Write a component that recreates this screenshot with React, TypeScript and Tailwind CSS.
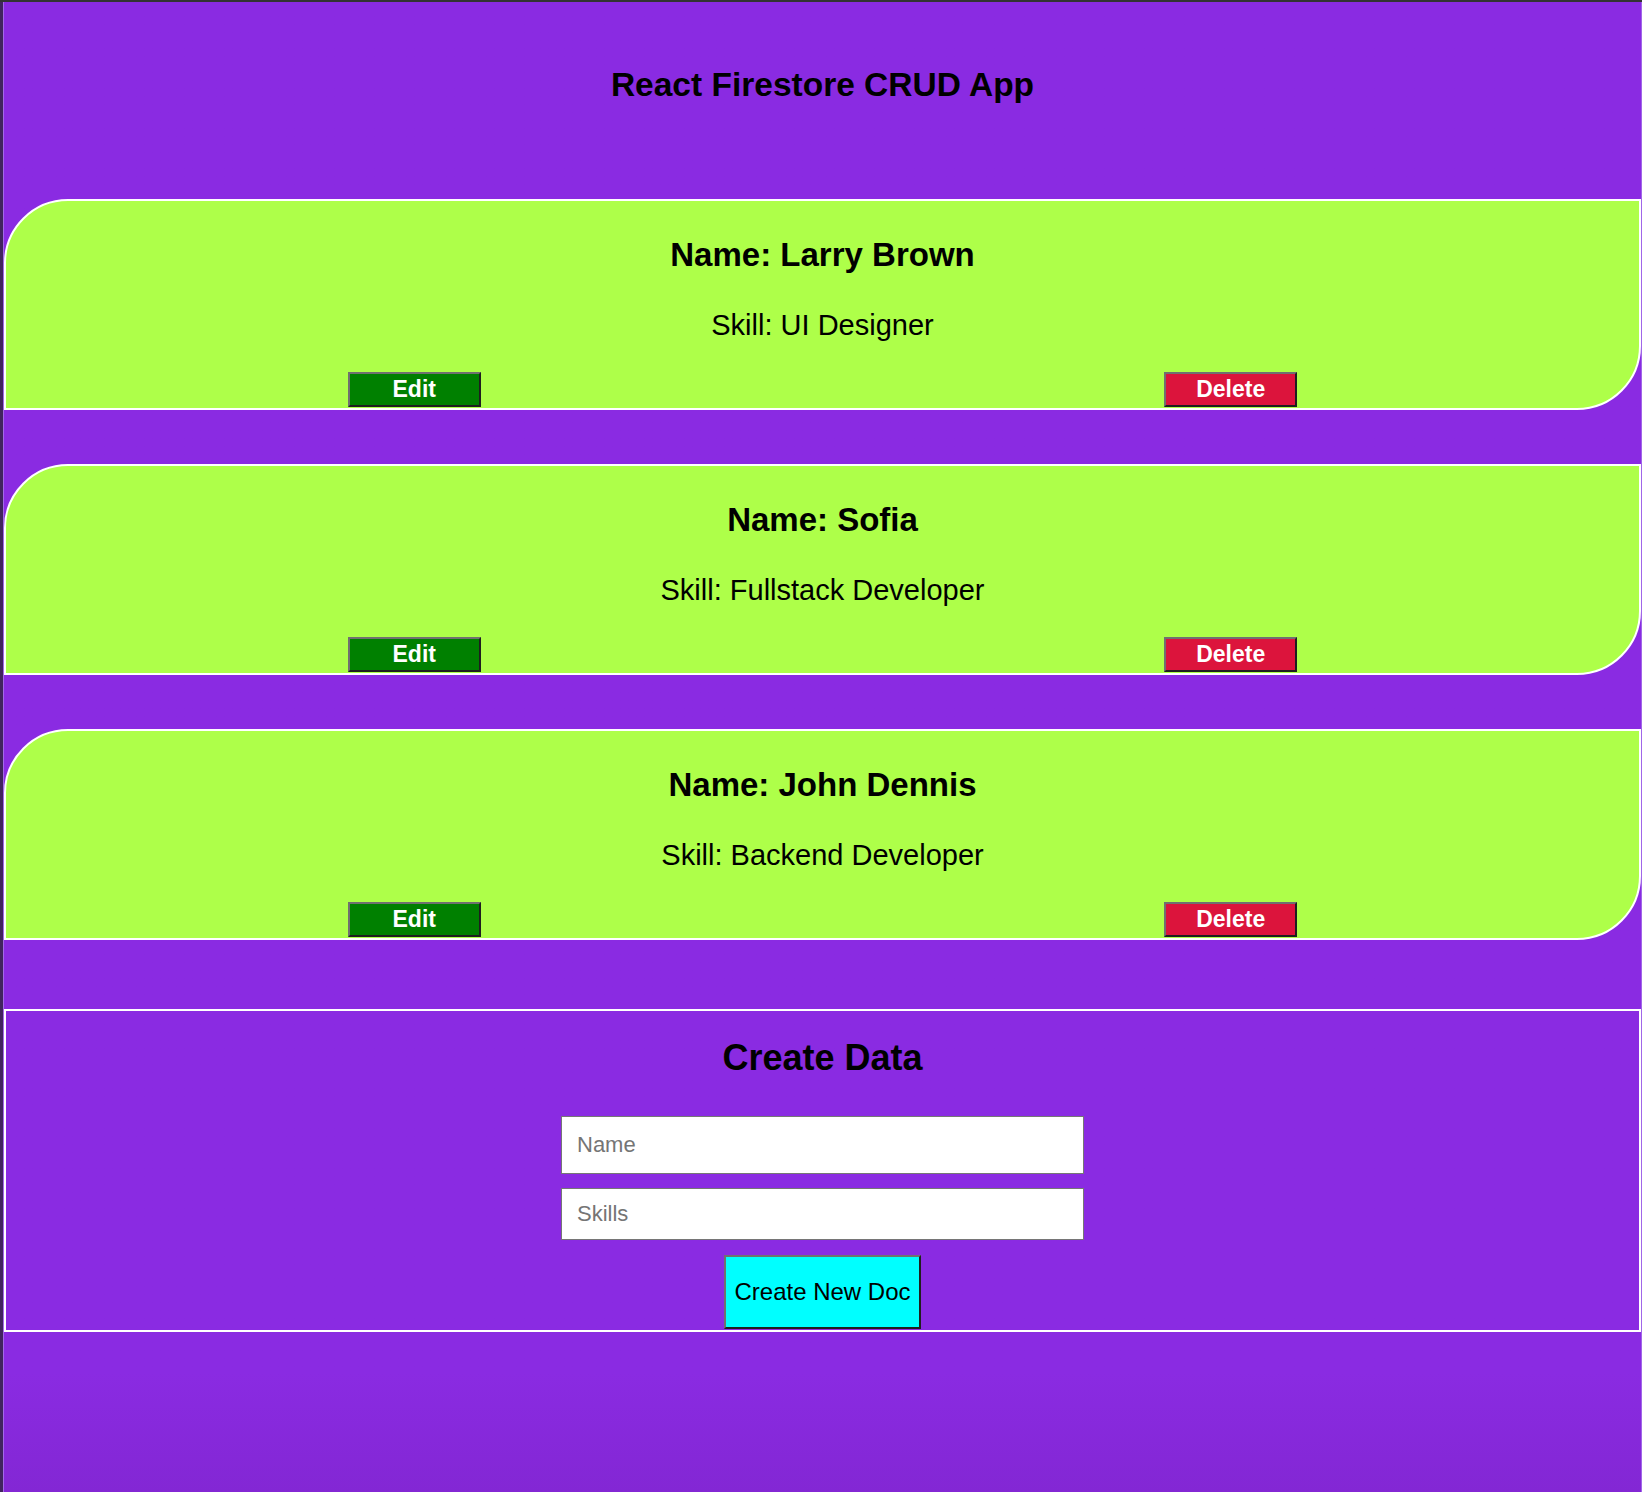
import React from "react";

const people = [
  { name: "Larry Brown", skill: "UI Designer" },
  { name: "Sofia", skill: "Fullstack Developer" },
  { name: "John Dennis", skill: "Backend Developer" },
];

function PersonCard({ name, skill }: { name: string; skill: string }) {
  return (
    <div className="border-2 border-white rounded-tl-[64px] rounded-br-[64px] bg-[#aeff49] pt-[34px] pb-px text-center">
      <h2 className="text-[33px] leading-[40px] font-bold">Name: {name}</h2>
      <p className="mt-[32px] text-[29px] leading-[36px]">Skill: {skill}</p>
      <div className="mt-[29px] flex justify-around">
        <button className="w-[133px] h-[35px] bg-[#008000] text-white font-bold text-[23px] leading-none border-2 border-t-[#707070] border-l-[#707070] border-b-[#1f1f1f] border-r-[#1f1f1f]">
          Edit
        </button>
        <button className="w-[133px] h-[35px] bg-[#dc143c] text-white font-bold text-[23px] leading-none border-2 border-t-[#707070] border-l-[#707070] border-b-[#1f1f1f] border-r-[#1f1f1f]">
          Delete
        </button>
      </div>
    </div>
  );
}

export default function App() {
  return (
    <div className="min-h-screen flex flex-col bg-[#8a2be2] font-['Liberation_Sans',Arial,sans-serif] text-black">
      <div className="h-[2px] bg-[#333333]" />
      <div className="flex flex-1">
        <div className="w-[3px] bg-[#41245f]" />
        <main className="flex-1 border-l border-l-[#a46ae9] border-r border-r-[#a066e8] bg-gradient-to-b from-[#8a2be2] from-92% to-[#8327d4]">
          <h1 className="mt-[63px] text-center text-[33.5px] leading-[40px] font-bold">
            React Firestore CRUD App
          </h1>

          <div className="mt-[94px] flex flex-col gap-[54px]">
            {people.map((p) => (
              <PersonCard key={p.name} name={p.name} skill={p.skill} />
            ))}
          </div>

          <section className="mt-[69px] border-2 border-white pt-[26px] pb-px flex flex-col items-center">
            <h2 className="text-[36px] leading-[42px] font-bold">Create Data</h2>
            <input
              type="text"
              placeholder="Name"
              className="mt-[37px] w-[523px] h-[58px] bg-white border border-[#767676] px-[15px] text-[22px] placeholder:text-[#757575] outline-none"
            />
            <input
              type="text"
              placeholder="Skills"
              className="mt-[14px] w-[523px] h-[52px] bg-white border border-[#767676] px-[15px] text-[22px] placeholder:text-[#757575] outline-none"
            />
            <button className="mt-[15px] w-[197px] h-[74px] bg-[#00ffff] text-[24px] border-2 border-t-[#707070] border-l-[#707070] border-b-[#1f1f1f] border-r-[#1f1f1f]">
              Create New Doc
            </button>
          </section>
        </main>
      </div>
    </div>
  );
}
